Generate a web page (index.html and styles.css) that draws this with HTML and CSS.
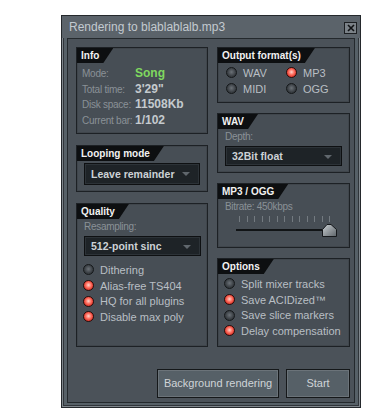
FILE: index.html
```html
<html>
<head>
<meta charset="utf-8">
<link rel="stylesheet" href="styles.css">
<title>Rendering</title>
</head>
<body>
<div class=dialog>
<div class=titlebar><span class=title>Rendering to blablablalb.mp3</span><span class=close>
<svg width="8" height="8" viewBox="0 0 8 8"><path d="M1 1L7 7M7 1L1 7" stroke="#101214" stroke-width="1.6"/></svg></span></div>
<div class=panel>
<div class=cols>
<div class=col>
<div class="box info">
<div class=tab>Info</div>
<div class=rows>
<div class=row><span class=lbl>Mode:</span><span class="val song">Song</span></div>
<div class=row><span class=lbl>Total time:</span><span class=val>3'29"</span></div>
<div class=row><span class=lbl>Disk space:</span><span class=val>11508Kb</span></div>
<div class=row><span class=lbl>Current bar:</span><span class=val>1/102</span></div>
</div>
</div>
<div class="box looping">
<div class=tab>Looping mode</div>
<div class="drop tall">Leave remainder<span class=arrow></span></div>
</div>
<div class="box quality">
<div class=tab>Quality</div>
<div class=cap>Resampling:</div>
<div class=drop>512-point sinc<span class=arrow></span></div>
<div class=leds>
<div class=led><span class=dot></span>Dithering</div>
<div class=led><span class="dot on"></span>Alias-free TS404</div>
<div class=led><span class="dot on"></span>HQ for all plugins</div>
<div class=led><span class="dot on"></span>Disable max poly</div>
</div>
</div>
</div>
<div class=col>
<div class="box output">
<div class=tab>Output format(s)</div>
<div class=grid>
<div class=led><span class=dot></span>WAV</div>
<div class=led><span class="dot on"></span>MP3</div>
<div class=led><span class=dot></span>MIDI</div>
<div class=led><span class=dot></span>OGG</div>
</div>
</div>
<div class="box wav">
<div class=tab>WAV</div>
<div class=cap>Depth:</div>
<div class=drop>32Bit float<span class=arrow></span></div>
</div>
<div class="box mp3">
<div class=tab>MP3 / OGG</div>
<div class=cap>Bitrate: 450kbps</div>
<div class=slider>
<div class=ticks><i></i><i></i><i></i><i></i><i></i><i></i><i></i><i></i><i></i><i></i><i></i><i></i><i></i></div>
<div class=track></div>
<svg class=thumb width="17" height="14" viewBox="0 0 17 14"><defs><linearGradient id="tg" x1="0" y1="0" x2="1" y2="1"><stop offset="0" stop-color="#c9ced2"/><stop offset="1" stop-color="#5d6469"/></linearGradient></defs><path d="M1.5 13.5V6.5L6 1.5H10L15.5 6.5V13.5Z" fill="url(#tg)" stroke="#15181b"/></svg>
</div>
</div>
<div class="box options">
<div class=tab>Options</div>
<div class=leds>
<div class=led><span class=dot></span>Split mixer tracks</div>
<div class=led><span class="dot on"></span>Save ACIDized&trade;</div>
<div class=led><span class=dot></span>Save slice markers</div>
<div class=led><span class="dot on"></span>Delay compensation</div>
</div>
</div>
</div>
</div>
<div class=buttons>
<div class="btn bg">Background rendering</div>
<div class="btn start">Start</div>
</div>
</div>
</div>
</body>
</html>
```
FILE: styles.css
```css
html,body{margin:0;background:#ffffff}
body{font-family:"Liberation Sans",Arial,sans-serif;font-size:11px;white-space:nowrap}
.dialog{box-sizing:border-box;width:300px;height:393px;margin:15px 0 0 61px;background:#566067;
border:1px solid #24282c;box-shadow:inset 0 0 0 1px #7f868c,inset 0 0 0 2px #30353a;display:flex;flex-direction:column}
.titlebar{height:22px;flex:none;display:flex;align-items:center;justify-content:space-between;padding:0 3px 0 7px;background:#5b636a}
.title{font-size:12px;color:#c3cad0}
.close{box-sizing:border-box;width:13px;height:12px;border:1px solid #1c1f22;background:#7b8288;display:flex;align-items:center;justify-content:center;margin-top:1px}
.panel{box-sizing:border-box;flex:1;margin:0 5px 4px 5px;background:#4b5259;border:1px solid #24292d;padding:8px 4px 4px 8px;display:flex;flex-direction:column}
.cols{display:flex;gap:9px;height:300px}
.col{display:flex;flex-direction:column}
.col:first-child{width:132px;gap:11px}
.col:last-child{width:133px;gap:10px}
.box{box-sizing:border-box;background:#474e55;border:1px solid #1d2125;box-shadow:inset 0 0 0 1px #40464c}
.info{height:87px}
.looping{height:47px}
.quality{height:144px}
.output{height:56px}
.wav{height:60px}
.mp3{height:65px}
.options{height:89px}
.tab{display:inline-block;height:15px;line-height:15px;padding:0 14px 0 4px;background:#0d0f11;color:#f2f2f2;font-weight:bold;font-size:10px;
clip-path:polygon(0 0,100% 0,calc(100% - 10px) 100%,0 100%)}
.rows{padding:3px 0 0 5px}
.row{height:15.7px;line-height:15.7px;display:flex}
.lbl{width:53px;color:#8a9197;font-size:10px;letter-spacing:-0.25px}
.val{color:#c4cace;font-weight:bold;font-size:12px}
.song{color:#7fd85f}
.cap{color:#8a9197;padding-left:7px;height:13px;line-height:13px;margin-top:1px;font-size:10px;letter-spacing:-0.3px}
.drop{box-sizing:border-box;position:relative;height:20px;line-height:18px;margin:3px 0 0 7px;width:117px;background:#1e2327;border:1px solid #0e1012;
box-shadow:inset 0 0 0 1px #2c3237;color:#cdd2d6;font-weight:bold;padding-left:6px;font-size:10.5px}
.drop.tall{height:22px;line-height:20px;margin-top:2px;width:116px}
.arrow{position:absolute;right:9px;top:8px;border-left:4px solid transparent;border-right:4px solid transparent;border-top:4px solid #60676d}
.leds{padding-left:6px;margin-top:5px}
.quality .leds{margin-top:6px}
.options .leds{margin-top:2px}
.led{display:flex;align-items:center;height:15.7px;color:#b9bfc4;font-size:11px}
.dot{box-sizing:border-box;width:11px;height:11px;border-radius:50%;border:1px solid #15181a;margin-right:6px;flex:none;
background:radial-gradient(circle at 50% 45%,#6b7177 0,#3d4247 55%,#25292c 100%)}
.dot.on{border-color:#2c0c0a;background:radial-gradient(circle at 50% 45%,#ffd6ce 0,#ff6f60 40%,#d42a20 80%,#8c1610 100%)}
.grid{display:grid;grid-template-columns:60px 60px;padding:2px 0 0 8px}
.slider{position:relative;height:30px;margin:0 0 0 18px;width:100px}
.ticks{position:absolute;left:3px;top:3px;display:flex;gap:6.5px}
.ticks i{display:block;width:1px;height:6px;background:#737a80}
.track{position:absolute;left:0;top:16px;width:98px;height:2px;background:#111416}
.thumb{position:absolute;left:85px;top:10px}
.buttons{display:flex;justify-content:flex-end;gap:7px;margin-top:22px}
.btn{box-sizing:border-box;height:29px;line-height:27px;text-align:center;background:#566067;border:1px solid #15181a;
box-shadow:inset 0 0 0 1px #6b7379;color:#cfd4d8;font-size:11px}
.bg{width:122px}
.start{width:64px}
```
